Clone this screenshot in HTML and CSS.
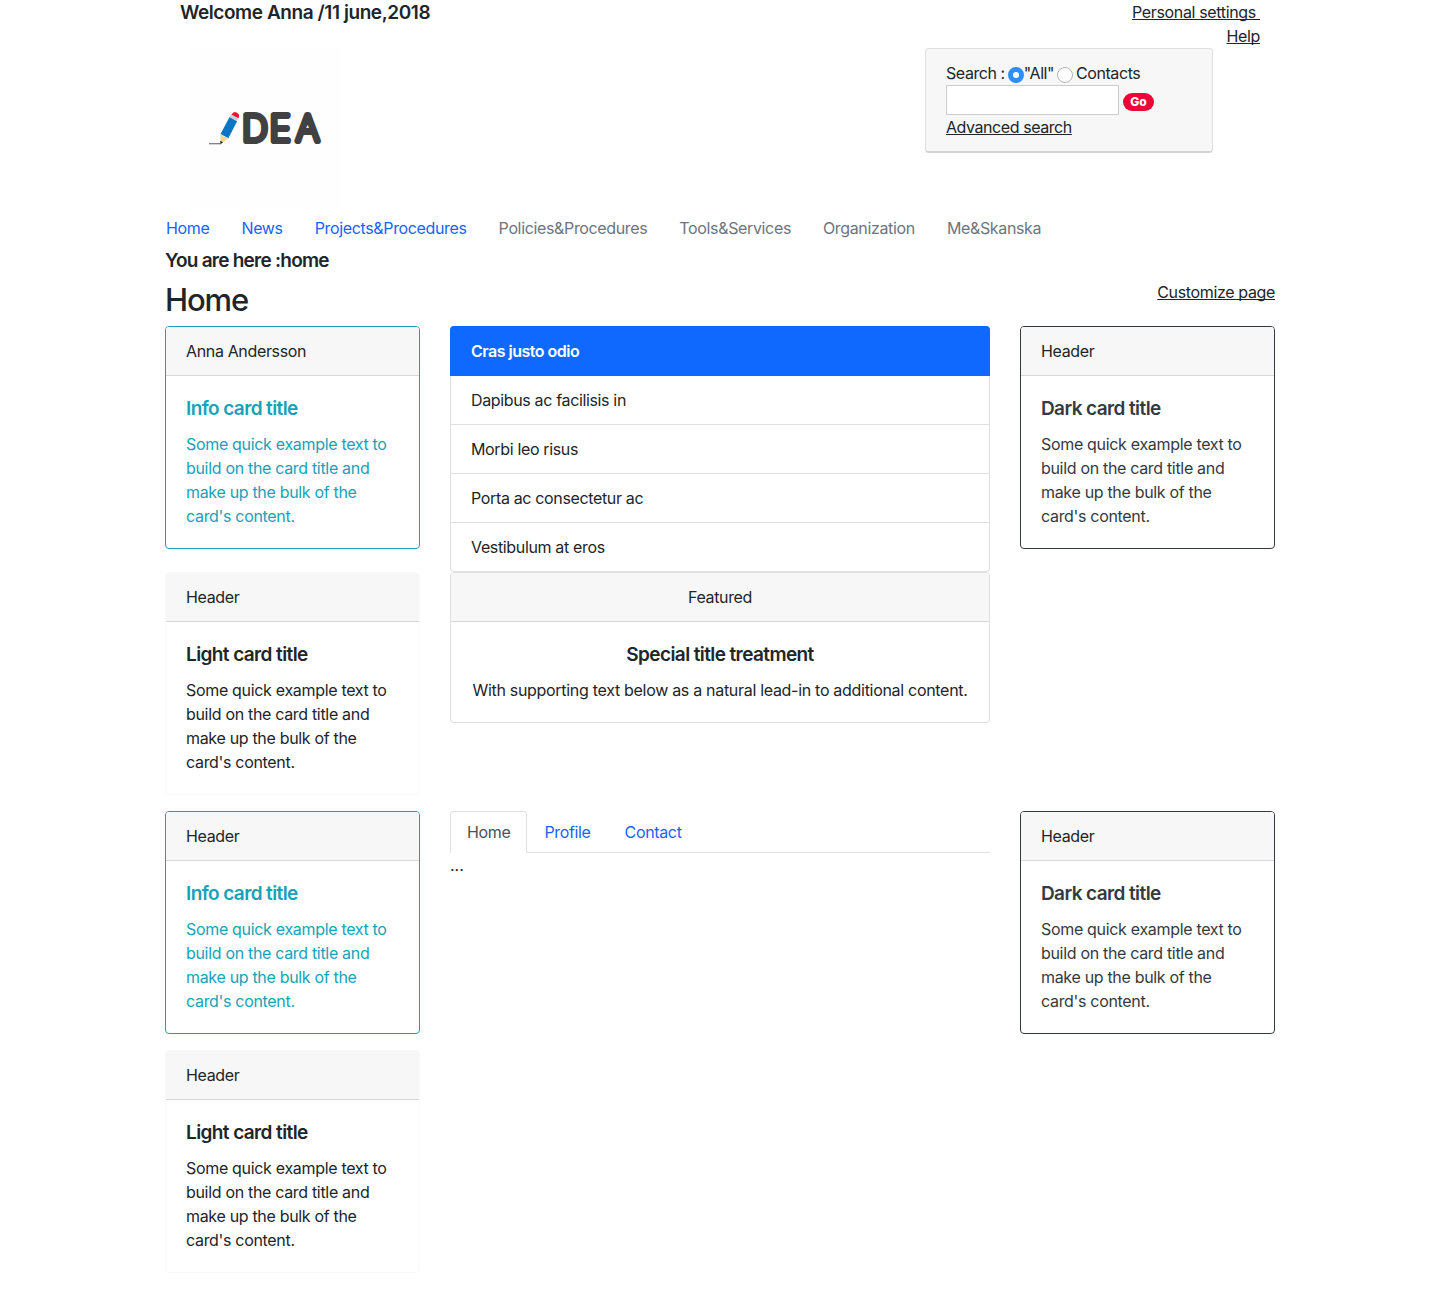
FILE: index.html
```html
<!DOCTYPE html>
<html lang="en">
<head>
<meta charset="utf-8">
<title>Home</title>
<link rel="stylesheet" href="styles.css">
</head>
<body>
<div class="container">
  <header class="topbar">
    <h5 class="welcome">Welcome Anna /11 june,2018</h5>
    <div class="top-links"><a href="#">Personal settings&nbsp;</a><a href="#">Help</a></div>
  </header>
  <div class="brand">
    <svg class="logo" viewBox="190 48 150 160" role="img" aria-label="Idea">
      <path d="M209 143.700h12" stroke="#777" stroke-width="1.200"/>
      <path d="M229.600 117l7.500 4.200-8.700 17-7.900-4.200z" fill="#0c75c4"/>
      <path d="M229.600 117l2-3.300 7 4-1.500 3.500z" fill="#c9cdd1"/>
      <path d="M232.100 114.300c2-3.500 8-1 6.200 3.300z" fill="#f00b2d" stroke="#f00b2d"/>
      <path d="M220.500 134l2.200 1.500 1.400 1.600 2-.2 2.300 1.300-8 6z" fill="#ecd98c"/>
      <path d="M220.300 140.700l2.700 1.500-2.500 2z" fill="#222"/>
      <text class="logo-text" x="242.200 269.800 296.300" y="140.700">DEA</text>
    </svg>
    <form class="search">
      <div class="search-line">Search :<input class="radio" type="radio" name="scope" checked>"All"<input class="radio radio-next" type="radio" name="scope">Contacts</div>
      <div class="search-line search-entry"><input class="field" type="text"><span class="go">Go</span></div>
      <div class="search-line"><a href="#">Advanced search</a></div>
    </form>
  </div>
  <nav class="nav">
    <a href="#">Home</a><a href="#">News</a><a href="#">Projects&amp;Procedures</a><a class="muted" href="#">Policies&amp;Procedures</a><a class="muted" href="#">Tools&amp;Services</a><a class="muted" href="#">Organization</a><a class="muted" href="#">Me&amp;Skanska</a>
  </nav>
  <h5 class="crumb">You are here :home</h5>
  <div class="heading"><h2>Home</h2><a href="#">Customize page</a></div>

  <div class="row">
    <section class="card info">
      <div class="card-header">Anna Andersson</div>
      <div class="card-body"><h5>Info card title</h5><p>Some quick example text to build on the card title and make up the bulk of the card's content.</p></div>
    </section>
    <ul class="list">
      <li class="active">Cras justo odio</li>
      <li>Dapibus ac facilisis in</li>
      <li>Morbi leo risus</li>
      <li>Porta ac consectetur ac</li>
      <li>Vestibulum at eros</li>
    </ul>
    <section class="card dark">
      <div class="card-header">Header</div>
      <div class="card-body"><h5>Dark card title</h5><p>Some quick example text to build on the card title and make up the bulk of the card's content.</p></div>
    </section>
  </div>

  <div class="row">
    <section class="card light">
      <div class="card-header">Header</div>
      <div class="card-body"><h5>Light card title</h5><p>Some quick example text to build on the card title and make up the bulk of the card's content.</p></div>
    </section>
    <section class="card featured">
      <div class="card-header">Featured</div>
      <div class="card-body"><h5>Special title treatment</h5><p>With supporting text below as a natural lead-in to additional content.</p></div>
    </section>
  </div>

  <div class="row">
    <section class="card info">
      <div class="card-header">Header</div>
      <div class="card-body"><h5>Info card title</h5><p>Some quick example text to build on the card title and make up the bulk of the card's content.</p></div>
    </section>
    <div class="tab-panel">
      <div class="tabs"><a class="selected" href="#">Home</a><a href="#">Profile</a><a href="#">Contact</a></div>
      <div class="tab-content">...</div>
    </div>
    <section class="card dark">
      <div class="card-header">Header</div>
      <div class="card-body"><h5>Dark card title</h5><p>Some quick example text to build on the card title and make up the bulk of the card's content.</p></div>
    </section>
  </div>

  <div class="row">
    <section class="card light">
      <div class="card-header">Header</div>
      <div class="card-body"><h5>Light card title</h5><p>Some quick example text to build on the card title and make up the bulk of the card's content.</p></div>
    </section>
  </div>
</div>
</body>
</html>
```
FILE: styles.css
```css
* { box-sizing: border-box; }
body {
  margin: 0;
  background: #fff;
  color: #212529;
  font: 400 16px/24px Inter, "Liberation Sans", sans-serif;
  letter-spacing: -0.35px;
}
h2, h5, p, ul { margin: 0; padding: 0; }
h5 { height: 24px; padding-top: 1px; font-size: 19px; line-height: 24px; font-weight: 600; letter-spacing: -0.6px; }
h2 { padding-top: 1px; font-size: 31px; line-height: 38px; font-weight: 500; letter-spacing: -1.1px; }
a { color: #212529; text-decoration: underline; text-decoration-skip-ink: none; }
.container { width: 1110px; margin: 0 auto; }

.topbar { display: flex; justify-content: space-between; height: 48px; padding: 0 15px; }
.welcome { letter-spacing: -0.43px; }
.top-links { display: flex; flex-direction: column; align-items: flex-end; }

.brand { display: flex; justify-content: space-between; align-items: flex-start; height: 160px; padding: 0 62px 0 25px; }
.logo { width: 150px; height: 160px; background: #fefefe; fill: none; }
.logo-text {
  font: 100 35.5px Inter, sans-serif;
  letter-spacing: 0;
  fill: #414042;
  stroke: #414042;
  stroke-width: 6.2px;
  stroke-linejoin: round;
}

.search {
  width: 288px;
  height: 105px;
  padding: 12px 20px;
  background: #f7f7f7;
  border: 1px solid #dfdfdf;
  border-bottom: 2px solid #d3d3d3;
  border-radius: 4px;
  letter-spacing: -0.43px;
}
.search-line { display: flex; align-items: center; height: 24px; }
.search-entry { height: 30px; }
.radio {
  appearance: none;
  flex: none;
  width: 16px;
  height: 16px;
  margin: 3px 0 0 3px;
  border: 1px solid #b5b5b5;
  border-radius: 50%;
  background: #fff;
}
.radio:checked { border: 5px solid #2d8eff; }
.radio-next { margin-right: 3px; }
.field { width: 173px; height: 30px; border: 1px solid #ccc; background: #fff; }
.go {
  width: 31px;
  height: 18px;
  margin: 4px 0 0 4px;
  border-radius: 9px;
  background: #ee0538;
  color: #fff;
  font-size: 12px;
  font-weight: 800;
  line-height: 18px;
  letter-spacing: 0;
  text-align: center;
}

.nav { display: flex; gap: 32px; height: 40px; padding: 8px 0 0 1px; }
.nav a { color: #1763ff; text-decoration: none; }
.nav .muted { color: #6c757d; }
.crumb { margin-bottom: 8px; letter-spacing: -0.75px; }
.heading { display: flex; justify-content: space-between; align-items: flex-start; height: 46px; }

.row { display: grid; grid-template-columns: 255px 540px 255px; column-gap: 30px; align-items: start; }
.card { border: 1px solid #dfdfdf; border-radius: 4px; margin-bottom: 16px; overflow: hidden; }
.card-header { height: 49px; padding: 12px 20px; background: #f7f7f7; border-bottom: 1px solid #d8d8d8; }
.card-body { padding: 20px; }
.card-body h5 { margin-bottom: 12px; }
.card-body p { letter-spacing: -0.32px; }
.info { border-color: #17a2b8; }
.info .card-body { color: #17a2b8; }
.dark { border-color: #343a40; }
.dark .card-body { color: #343a40; }
.light { border-color: #f8f9fa; }
.featured { text-align: center; }
.featured .card-body { padding: 20px 10px; }
.featured .card-body p { letter-spacing: -0.3px; }

.list { list-style: none; border: 1px solid #dfdfdf; border-radius: 4px; }
.list li { height: 49px; padding: 12px 20px; border-bottom: 1px solid #dfdfdf; }
.list li:last-child { height: 48px; border-bottom: 0; }
.list .active {
  height: 50px;
  margin: -1px -1px 0;
  padding: 13px 21px;
  border: 0;
  border-radius: 4px 4px 0 0;
  background: #0f69ff;
  color: #fff;
  font-weight: 600;
  letter-spacing: -0.5px;
}

.tabs { display: flex; height: 42px; border-bottom: 1px solid #dee2e6; }
.tabs a { height: 42px; padding: 9px 17px 0; color: #1763ff; text-decoration: none; }
.tabs .selected {
  border: 1px solid #dee2e6;
  border-bottom: 0;
  border-radius: 4px 4px 0 0;
  background: #fff;
  padding: 8px 16px 0;
  color: #495057;
}
.tab-content { letter-spacing: 0; }
```
